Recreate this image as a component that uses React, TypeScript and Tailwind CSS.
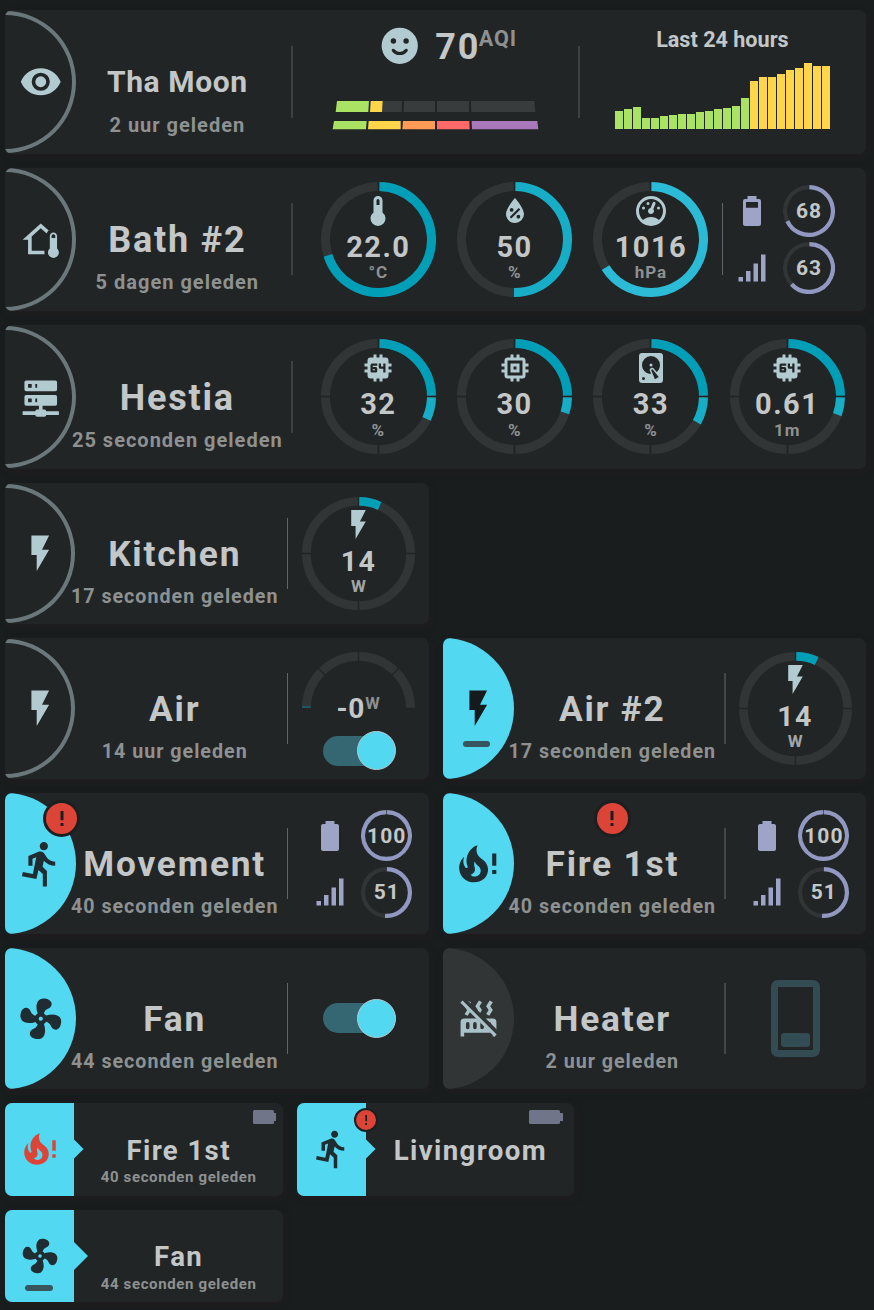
import type { ReactNode } from "react";
import clsx from "clsx";

const ICONS = {
  eye: "M12,9A3,3 0 0,0 9,12A3,3 0 0,0 12,15A3,3 0 0,0 15,12A3,3 0 0,0 12,9M12,17A5,5 0 0,1 7,12A5,5 0 0,1 12,7A5,5 0 0,1 17,12A5,5 0 0,1 12,17M12,4.5C7,4.5 2.73,7.61 1,12C2.73,16.39 7,19.5 12,19.5C17,19.5 21.27,16.39 23,12C21.27,7.61 17,4.5 12,4.5Z",
  homeThermometer:
    "M19 8C20.11 8 21 8.9 21 10V16.76C21.61 17.31 22 18.11 22 19C22 20.66 20.66 22 19 22C17.34 22 16 20.66 16 19C16 18.11 16.39 17.31 17 16.76V10C17 8.9 17.9 8 19 8M19 9C18.45 9 18 9.45 18 10V11H20V10C20 9.45 19.55 9 19 9M12 5.69L7 10.19V18H14.1L14 19L14.1 20H5V12H2L12 3L16.4 6.96C15.89 7.4 15.5 7.97 15.25 8.61L12 5.69Z",
  server:
    "M13,19H14A1,1 0 0,1 15,20H22V22H15A1,1 0 0,1 14,23H10A1,1 0 0,1 9,22H2V20H9A1,1 0 0,1 10,19H11V17H4A1,1 0 0,1 3,16V12A1,1 0 0,1 4,11H20A1,1 0 0,1 21,12V16A1,1 0 0,1 20,17H13V19M4,3H20A1,1 0 0,1 21,4V8A1,1 0 0,1 20,9H4A1,1 0 0,1 3,8V4A1,1 0 0,1 4,3M9,7H10V5H9V7M9,15H10V13H9V15M5,5V7H7V5H5M5,13V15H7V13H5Z",
  flash: "M7,2V13H10V22L17,10H13L17,2H7Z",
  run: "M13.5,5.5C14.59,5.5 15.5,4.58 15.5,3.5C15.5,2.38 14.59,1.5 13.5,1.5C12.39,1.5 11.5,2.38 11.5,3.5C11.5,4.58 12.39,5.5 13.5,5.5M9.89,19.38L10.89,15L13,17V23H15V15.5L12.89,13.5L13.5,10.5C14.79,12 16.79,13 19,13V11C17.09,11 15.5,10 14.69,8.58L13.69,7C13.29,6.38 12.69,6 12,6C11.69,6 11.5,6.08 11.19,6.08L6,8.28V13H8V9.58L9.79,8.88L8.19,17L3.29,16L2.89,18L9.89,19.38Z",
  fan: "M12,11A1,1 0 0,0 11,12A1,1 0 0,0 12,13A1,1 0 0,0 13,12A1,1 0 0,0 12,11M12.5,2C17,2 17.11,5.57 14.75,6.75C13.76,7.24 13.32,8.29 13.13,9.22C13.61,9.42 14.03,9.73 14.35,10.13C18.05,8.13 22.03,8.92 22.03,12.5C22.03,17 18.46,17.1 17.28,14.73C16.78,13.74 15.72,13.3 14.79,13.11C14.59,13.59 14.28,14 13.88,14.34C15.87,18.03 15.08,22 11.5,22C7,22 6.91,18.42 9.27,17.24C10.25,16.75 10.69,15.71 10.89,14.79C10.4,14.59 9.97,14.27 9.65,13.87C5.96,15.85 2,15.07 2,11.5C2,7 5.56,6.89 6.74,9.26C7.24,10.25 8.29,10.68 9.22,10.87C9.41,10.39 9.73,9.97 10.14,9.65C8.15,5.96 8.94,2 12.5,2Z",
  thermometer: "M15 13V5A3 3 0 0 0 9 5V13A5 5 0 1 0 15 13M12 4A1 1 0 0 1 13 5V8H11V5A1 1 0 0 1 12 4Z",
  waterPercent:
    "M12,3.25C12,3.25 6,10 6,14C6,17.32 8.69,20 12,20A6,6 0 0,0 18,14C18,10 12,3.25 12,3.25M14.47,9.97L15.53,11.03L9.53,17.03L8.47,15.97M9.75,10A1.25,1.25 0 0,1 11,11.25A1.25,1.25 0 0,1 9.75,12.5A1.25,1.25 0 0,1 8.5,11.25A1.25,1.25 0 0,1 9.75,10M14.25,14.5A1.25,1.25 0 0,1 15.5,15.75A1.25,1.25 0 0,1 14.25,17A1.25,1.25 0 0,1 13,15.75A1.25,1.25 0 0,1 14.25,14.5Z",
  gauge:
    "M12,2A10,10 0 0,0 2,12A10,10 0 0,0 12,22A10,10 0 0,0 22,12A10,10 0 0,0 12,2M12,4A8,8 0 0,1 20,12C20,14.4 19,16.5 17.3,18C15.9,16.7 14,16 12,16C10,16 8.2,16.7 6.7,18C5,16.5 4,14.4 4,12A8,8 0 0,1 12,4M14,5.89C13.62,5.9 13.26,6.15 13.1,6.54L11.81,9.77L11.71,10C11,10.13 10.41,10.6 10.14,11.26C9.73,12.29 10.23,13.45 11.26,13.86C12.29,14.27 13.45,13.77 13.86,12.74C14.12,12.08 14,11.32 13.57,10.76L13.67,10.5L14.96,7.29L14.97,7.26C15.17,6.75 14.92,6.17 14.41,5.96C14.28,5.91 14.15,5.89 14,5.89M10,6A1,1 0 0,0 9,7A1,1 0 0,0 10,8A1,1 0 0,0 11,7A1,1 0 0,0 10,6M7,9A1,1 0 0,0 6,10A1,1 0 0,0 7,11A1,1 0 0,0 8,10A1,1 0 0,0 7,9M17,9A1,1 0 0,0 16,10A1,1 0 0,0 17,11A1,1 0 0,0 18,10A1,1 0 0,0 17,9Z",
  cpu64: "M9,3V5H7A2,2 0 0,0 5,7V9H3V11H5V13H3V15H5V17A2,2 0 0,0 7,19H9V21H11V19H13V21H15V19H17A2,2 0 0,0 19,17V15H21V13H19V11H21V9H19V7A2,2 0 0,0 17,5H15V3H13V5H11V3M8,9H11.5V10.5H8.5V11.25H10.5A1,1 0 0,1 11.5,12.25V14A1,1 0 0,1 10.5,15H8A1,1 0 0,1 7,14V10A1,1 0 0,1 8,9M12.5,9H14V11H15.5V9H17V15H15.5V12.5H13.5A1,1 0 0,1 12.5,11.5M8.5,12.75V13.5H10V12.75",
  memory:
    "M17,17H7V7H17M21,11V9H19V7C19,5.89 18.1,5 17,5H15V3H13V5H11V3H9V5H7C5.89,5 5,5.89 5,7V9H3V11H5V13H3V15H5V17A2,2 0 0,0 7,19H9V21H11V19H13V21H15V19H17A2,2 0 0,0 19,17V15H21V13H19V11M13,13H11V11H13M15,9H9V15H15V9Z",
  harddisk:
    "M6,2H18A2,2 0 0,1 20,4V20A2,2 0 0,1 18,22H6A2,2 0 0,1 4,20V4A2,2 0 0,1 6,2M12,4A6,6 0 0,0 6,10C6,13.31 8.69,16 12.1,16L11.22,13.77C10.95,13.29 11.11,12.68 11.59,12.4L12.45,11.9C12.93,11.63 13.54,11.79 13.82,12.27L15.74,14.69C17.12,13.59 18,11.9 18,10A6,6 0 0,0 12,4M12,9A1,1 0 0,1 13,10A1,1 0 0,1 12,11A1,1 0 0,1 11,10A1,1 0 0,1 12,9M7,18A1,1 0 0,0 6,19A1,1 0 0,0 7,20A1,1 0 0,0 8,19A1,1 0 0,0 7,18M12.09,13.27L14.58,19.58L17.17,18.08L12.95,12.77L12.09,13.27Z",
  battery:
    "M16.67,4H15V2H9V4H7.33A1.33,1.33 0 0,0 6,5.33V20.67C6,21.4 6.6,22 7.33,22H16.67A1.33,1.33 0 0,0 18,20.67V5.33C18,4.6 17.4,4 16.67,4Z",
  batteryPartial:
    "M16,9.8H8V6H16M16.67,4H15V2H9V4H7.33A1.33,1.33 0 0,0 6,5.33V20.67C6,21.4 6.6,22 7.33,22H16.67A1.33,1.33 0 0,0 18,20.67V5.33C18,4.6 17.4,4 16.67,4Z",
  signal: "M3,21H6V18H3M8,21H11V14H8M13,21H16V9H13M18,21H21V3H18V21Z",
  fireAlert:
    "M15.66 11.2C15.43 10.9 15.15 10.64 14.89 10.38C14.22 9.78 13.46 9.35 12.82 8.72C11.33 7.26 11 4.85 11.95 3C11 3.23 10.17 3.75 9.46 4.32C6.87 6.4 5.85 10.07 7.07 13.22C7.11 13.32 7.15 13.42 7.15 13.55C7.15 13.77 7 13.97 6.8 14.05C6.57 14.15 6.33 14.09 6.14 13.93C6.08 13.88 6.04 13.83 6 13.76C4.87 12.33 4.69 10.28 5.45 8.64C3.78 10 2.87 12.3 3 14.47C3.06 14.97 3.12 15.47 3.29 15.97C3.43 16.57 3.7 17.17 4 17.7C5.08 19.43 6.95 20.67 8.96 20.92C11.1 21.19 13.39 20.8 15.03 19.32C16.86 17.66 17.5 15 16.56 12.72L16.43 12.46C16.22 12 15.66 11.2 15.66 11.2M12.5 17.5C12.22 17.74 11.76 18 11.4 18.1C10.28 18.5 9.16 17.94 8.5 17.28C9.69 17 10.4 16.12 10.61 15.23C10.78 14.43 10.46 13.77 10.33 13C10.21 12.26 10.23 11.63 10.5 10.94C10.69 11.32 10.89 11.7 11.13 12C11.9 13 13.11 13.44 13.37 14.8C13.41 14.94 13.43 15.08 13.43 15.23C13.46 16.05 13.1 16.95 12.5 17.5M19 7H21V13H19M19 15H21V17H19Z",
  radiator:
    "M7.95,3L6.53,5.19L7.95,7.4H7.94L5.95,10.5L4.22,9.6L5.64,7.39L4.22,5.19L6.22,2.09L7.95,3M13.95,2.89L12.53,5.1L13.95,7.3L13.94,7.31L11.95,10.4L10.22,9.5L11.64,7.3L10.22,5.1L12.22,2L13.95,2.89M20,2.89L18.56,5.1L20,7.3V7.31L18,10.4L16.25,9.5L17.67,7.3L16.25,5.1L18.25,2L20,2.89M2,22V14A2,2 0 0,1 4,12H20A2,2 0 0,1 22,14V22H20V20H4V22H2M6,14A1,1 0 0,0 5,15V17A1,1 0 0,0 6,18A1,1 0 0,0 7,17V15A1,1 0 0,0 6,14M10,14A1,1 0 0,0 9,15V17A1,1 0 0,0 10,18A1,1 0 0,0 11,17V15A1,1 0 0,0 10,14M14,14A1,1 0 0,0 13,15V17A1,1 0 0,0 14,18A1,1 0 0,0 15,17V15A1,1 0 0,0 14,14M18,14A1,1 0 0,0 17,15V17A1,1 0 0,0 18,18A1,1 0 0,0 19,17V15A1,1 0 0,0 18,14Z",
};

type IconName = keyof typeof ICONS;

function Icon({ name, className }: { name: IconName; className?: string }) {
  return (
    <svg viewBox="0 0 24 24" className={clsx("shrink-0 fill-current", className)}>
      <path d={ICONS[name]} fillRule={name === "batteryPartial" ? "evenodd" : "nonzero"} />
    </svg>
  );
}

function RadiatorOff({ className }: { className?: string }) {
  return (
    <svg viewBox="0 0 24 24" className={clsx("shrink-0 fill-current", className)}>
      <mask id="radiator-cut">
        <rect width="24" height="24" fill="white" />
        <path d="M0.5,1.5L3.2,-0.9L25.4,21.3L23,24Z" fill="black" />
      </mask>
      <path d={ICONS.radiator} mask="url(#radiator-cut)" />
      <path d="M3.1,1.9L1.9,3.17L20.9,22.2L22.11,20.96Z" />
    </svg>
  );
}

function arc(c: number, r: number, from: number, to: number) {
  const a = ((from - 90) * Math.PI) / 180;
  const b = ((to - 90) * Math.PI) / 180;
  const large = to - from > 180 ? 1 : 0;
  return `M${c + r * Math.cos(a)} ${c + r * Math.sin(a)}A${r} ${r} 0 ${large} 1 ${c + r * Math.cos(b)} ${c + r * Math.sin(b)}`;
}

type RingProps = {
  size: number;
  stroke: number;
  end: number;
  colors: string[];
  start?: number;
  sweep?: number;
  segments?: number;
  gap?: number;
};

function Ring({ size, stroke, end, colors, start = 0, sweep = 360, segments = 1, gap = 1 }: RingProps) {
  const c = size / 2;
  const r = c - stroke / 2;
  const step = sweep / segments;
  return (
    <svg viewBox={`0 0 ${size} ${size}`} className="absolute inset-0 size-full fill-none">
      {Array.from({ length: segments }, (_, i) => {
        const from = start + i * step + gap;
        const to = start + (i + 1) * step - gap;
        const stop = Math.min(to, end);
        return (
          <g key={i} strokeWidth={stroke}>
            <path d={arc(c, r, from, to)} stroke="#323536" />
            {stop > from && <path d={arc(c, r, from, stop)} stroke={colors[Math.min(i, colors.length - 1)]} />}
          </g>
        );
      })}
    </svg>
  );
}

const TEAL = ["#009fb7", "#17adc6", "#2bbbd6"];

type GaugeProps = { icon: IconName; value: string; unit: string; end: number; colors?: string[]; segments?: number };

function Gauge({ icon, value, unit, end, colors = TEAL, segments = 4 }: GaugeProps) {
  return (
    <div className="relative flex size-[115px] shrink-0 flex-col items-center pt-[11px]">
      <Ring size={115} stroke={9} end={end} colors={colors} segments={segments} />
      <Icon name={icon} className="size-9 text-[#b2cbd1]" />
      <div className="mt-[2px] text-[29px] leading-8 font-bold tracking-[0.05em] text-[#c4c7c7]">{value}</div>
      <div className="-mt-[0.6px] text-[17px] leading-5 font-bold tracking-[0.05em] text-[#8e9191]">{unit}</div>
    </div>
  );
}

function PowerGauge() {
  return (
    <div className="relative flex size-[113px] shrink-0 flex-col items-center pt-[10.5px]">
      <Ring size={113} stroke={8.8} end={24} colors={TEAL} segments={4} gap={0.8} />
      <Icon name="flash" className="size-[35px] text-[#b2cbd1]" />
      <div className="mt-[3.5px] text-[28.5px] leading-8 font-bold tracking-[0.05em] text-[#c4c7c7]">14</div>
      <div className="-mt-[2px] text-[17px] leading-5 font-bold text-[#a3a6a6]">W</div>
    </div>
  );
}

function SmallRing({ value, end, size }: { value: string; end: number; size: number }) {
  return (
    <div className="relative flex shrink-0 items-center justify-center" style={{ width: size, height: size }}>
      <Ring size={size} stroke={4.2} end={end} colors={["#9198c2"]} gap={0.8} />
      <span className="text-[21px] leading-6 font-bold tracking-[0.05em] text-[#c4c7c7]">{value}</span>
    </div>
  );
}

function DeviceStatus({
  battery,
  signal,
  partial,
  size,
  className,
}: {
  battery: [string, number];
  signal: [string, number];
  partial?: boolean;
  size: number;
  className?: string;
}) {
  return (
    <div className={clsx("flex flex-col gap-[5.4px] text-[#9ea4c6]", className)}>
      <div className="flex items-center gap-[13.5px]">
        <Icon name={partial ? "batteryPartial" : "battery"} className="size-9" />
        <SmallRing value={battery[0]} end={battery[1]} size={size} />
      </div>
      <div className="flex items-center gap-[13.5px]">
        <Icon name="signal" className="size-9" />
        <SmallRing value={signal[0]} end={signal[1]} size={size} />
      </div>
    </div>
  );
}

function Toggle() {
  return (
    <div className="relative flex h-10 w-[73px] items-center">
      <div className="h-[30px] w-[68px] rounded-full bg-[#346772]" />
      <div className="absolute right-0 size-[39px] rounded-full border border-[#b2cbd1] bg-[#52d8f1]" />
    </div>
  );
}

function AlertBadge({ small, className }: { small?: boolean; className: string }) {
  return (
    <div
      className={clsx(
        "absolute flex items-center justify-center rounded-full border-[#1b1f20] bg-[#dd4438]",
        small ? "size-6 border-2" : "size-[37px] border-[3.5px]",
        className,
      )}
    >
      <svg viewBox="0 0 4 15" className={clsx("fill-[#1b1f20]", small ? "h-[10px]" : "h-[15px]")}>
        <path d="M0.5 0H3.5V9.3H0.5ZM0.5 12H3.5V15H0.5Z" />
      </svg>
    </div>
  );
}

type Tone = "ring" | "active" | "muted";

function Shell({ className, children }: { className?: string; children: ReactNode }) {
  return (
    <div
      className={clsx(
        "relative flex rounded-[7px] bg-[#222526] shadow-[2px_3px_6px_rgba(35,29,31,0.8)]",
        className,
      )}
    >
      {children}
    </div>
  );
}

function HalfDisc({ tone, narrow, children }: { tone: Tone; narrow?: boolean; children: ReactNode }) {
  return (
    <div className="flex h-full w-[71px] shrink-0 items-center overflow-hidden rounded-l-[7px]">
      <div
        className={clsx(
          "relative flex items-center justify-center rounded-r-full",
          narrow ? "w-[70px]" : "w-full",
          tone === "ring" && "h-[calc(100%-1.6px)] text-[#b2cbd1]",
          tone === "active" && "h-full bg-[#52d8f1] text-[#1f2d32]",
          tone === "muted" && "h-full bg-[#323536] text-[#a9c1c7]",
        )}
      >
        {tone === "ring" && (
          <div className="absolute inset-0 rounded-r-full border-4 border-l-0 border-[#6a777b]" />
        )}
        {children}
      </div>
    </div>
  );
}

function WideCard({ icon, name, small, ago, children }: { icon: IconName; name: string; small?: boolean; ago: string; children: ReactNode }) {
  return (
    <Shell className="h-[143.67px]">
      <HalfDisc tone="ring">
        <Icon name={icon} className="size-[43.5px]" />
      </HalfDisc>
      <div className="-ml-[5.7px] flex w-[214px] shrink-0 flex-col items-center pt-[51.3px] whitespace-nowrap">
        <div
          className={clsx(
            "leading-[42px] font-bold text-[#c4c7c7]",
            small ? "text-[30px] tracking-[0.02em]" : "text-[36px] tracking-[0.05em]",
          )}
        >
          {name}
        </div>
        <div className="mt-[9.3px] text-[20px] leading-6 font-bold tracking-[0.05em] text-[#8e9191]">{ago}</div>
      </div>
      <div className="ml-[6.7px] h-[72px] w-[2px] shrink-0 self-center bg-[#3e4142]" />
      {children}
    </Shell>
  );
}

function HalfCard({
  tone,
  icon,
  name,
  ago,
  right,
  badge,
  children,
}: {
  tone: Tone;
  icon: ReactNode;
  name: string;
  ago: string;
  right?: boolean;
  badge?: ReactNode;
  children: ReactNode;
}) {
  return (
    <Shell className="h-[141px]">
      <HalfDisc tone={tone} narrow={tone === "ring"}>{icon}</HalfDisc>
      <div className="-ml-[6.3px] flex w-[209px] shrink-0 flex-col items-center pt-[50px] whitespace-nowrap">
        <div className="pl-px text-[35.3px] leading-[42px] font-bold tracking-[0.05em] text-[#c4c7c7]">{name}</div>
        <div className="mt-[10px] pl-px text-[19.7px] leading-6 font-bold tracking-[0.05em] text-[#8e9191]">{ago}</div>
      </div>
      <div
        className={clsx(
          "h-[71px] shrink-0 self-center",
          right ? "mr-[13px] ml-[7.3px] w-[2px] bg-[#45484a]" : "mr-[14px] ml-[8.3px] w-px bg-[#626567]",
        )}
      />
      <div className="flex w-[113px] shrink-0 items-center justify-center">{children}</div>
      {badge}
    </Shell>
  );
}

function MiniCard({
  icon,
  name,
  ago,
  bigArrow,
  children,
}: {
  icon: ReactNode;
  name: string;
  ago?: string;
  bigArrow?: boolean;
  children?: ReactNode;
}) {
  return (
    <Shell className="h-full">
      <div className="relative flex w-[69.3px] shrink-0 items-center justify-center rounded-l-[7px] bg-[#52d8f1] text-[#1f2d32]">
        {icon}
        <svg
          viewBox="0 0 10 20"
          className={clsx(
            "absolute top-1/2 right-[0.3px] translate-x-full -translate-y-1/2 overflow-visible fill-[#52d8f1]",
            bigArrow ? "h-7 w-[14px]" : "h-[18.6px] w-[9.3px]",
          )}
        >
          <path d="M-2 0H0L10 10L0 20H-2Z" />
        </svg>
      </div>
      <div className="flex flex-1 flex-col items-center pt-8 whitespace-nowrap">
        <div className={clsx("text-[27.6px] leading-8 font-bold tracking-[0.05em] text-[#c4c7c7]", bigArrow && "-mt-px mb-px")}>{name}</div>
        {ago && <div className="mt-px text-[15px] leading-[18px] font-bold tracking-[0.042em] text-[#8e9191]">{ago}</div>}
      </div>
      {children}
    </Shell>
  );
}

function MiniBattery({ wide, className }: { wide?: boolean; className: string }) {
  return (
    <div className={clsx("absolute flex h-[14px] items-center", className)}>
      <div className={clsx("h-full rounded-[1.5px] bg-[#70758a]", wide ? "w-[31px]" : "w-[21px]")} />
      <div className={clsx("h-2 bg-[#70758a]", wide ? "w-[3.7px]" : "w-[2.2px]")} />
    </div>
  );
}

function AqiBars() {
  return (
    <svg viewBox="0 0 620 90" className="ml-[39px] h-[30px] w-[206.67px]">
      <g fill="#393c3d">
        <path d="M151 3H210L209 36H150Z" />
        <path d="M216 3H309V36H215Z" />
        <path d="M315 3H411V36H315Z" />
        <path d="M417 3H607L610 36H418Z" />
      </g>
      <path fill="#aae363" d="M15 3H111L109 36H11ZM6 63H104L102 88H2Z" />
      <path fill="#ffd64a" d="M116 3H152L150 36H114ZM110 63H206V88H108Z" />
      <path fill="#ff9a57" d="M213 63H309V88H211Z" />
      <path fill="#ff6968" d="M315 63H412L413 88H315Z" />
      <path fill="#a978ba" d="M419 63H616L619 88H420Z" />
    </svg>
  );
}

const HISTORY = [17.7, 19.7, 21.7, 10.7, 10.7, 12.7, 13.7, 14.7, 14.7, 16.7, 17.7, 19.7, 20.7, 22.7, 31, 48, 51.7, 51.7, 54.7, 58.7, 60.7, 65.7, 62.7, 62.7];

export default function App() {
  return (
    <div className="h-[1310px] w-[874px] overflow-hidden bg-[#191d1e] pt-[10px] pl-[5px] font-[Roboto,sans-serif]">
      <div className="flex w-[861.2px] flex-col gap-[14px]">
        <WideCard icon="eye" name="Tha Moon" small ago="2 uur geleden">
          <div className="flex w-[285px] shrink-0 flex-col pt-[14px]">
            <div className="flex h-11 pl-[85px]">
              <svg viewBox="0 0 24 24" className="size-[43.5px]">
                <circle cx="12" cy="12" r="10" fill="#b2cbd1" />
                <g fill="#222526">
                  <circle cx="8.5" cy="9.4" r="1.5" />
                  <circle cx="15.5" cy="9.4" r="1.5" />
                </g>
                <path d="M8.4 14.5C10.2 16.9 13.8 16.9 15.6 14.5" fill="none" stroke="#222526" strokeWidth="1.7" strokeLinecap="round" />
              </svg>
              <div className="mt-px ml-[13.7px] text-[36px] leading-[44px] font-bold tracking-[0.05em] text-[#c4c7c7]">70</div>
              <div className="mt-[3px] -ml-[1.4px] text-[21.6px] leading-6 font-bold tracking-[0.04em] text-[#8e9191]">AQI</div>
            </div>
            <div className="mt-8">
              <AqiBars />
            </div>
          </div>
          <div className="h-[72px] w-[2px] shrink-0 self-center bg-[#3e4142]" />
          <div className="flex flex-1 flex-col items-center pt-[18px] pr-[1.4px]">
            <div className="text-[21.6px] leading-6 font-bold text-[#c4c7c7]">Last 24 hours</div>
            <div className="flex h-[77px] items-end gap-px">
              {HISTORY.map((h, i) => (
                <div key={i} className={clsx("w-2", i < 15 ? "bg-[#aae363]" : "bg-[#ffd64a]")} style={{ height: h }} />
              ))}
            </div>
          </div>
        </WideCard>

        <WideCard icon="homeThermometer" name="Bath #2" ago="5 dagen geleden">
          <div className="ml-[27.8px] flex items-center gap-[21.3px]">
            <Gauge icon="thermometer" value="22.0" unit="°C" end={252.5} colors={["#009fb7"]} segments={1} />
            <Gauge icon="waterPercent" value="50" unit="%" end={180.5} colors={["#17adc6"]} segments={1} />
            <Gauge icon="gauge" value="1016" unit="hPa" end={238} colors={["#2bbbd6"]} segments={1} />
          </div>
          <div className="ml-[13.6px] h-[72px] w-px shrink-0 self-center bg-[#636668]" />
          <DeviceStatus battery={["68", 245]} signal={["63", 227]} partial size={52} className="ml-[10.6px] self-center" />
        </WideCard>

        <WideCard icon="server" name="Hestia" ago="25 seconden geleden">
          <div className="ml-[27.8px] flex items-center gap-[21.3px] pb-px">
            <Gauge icon="cpu64" value="32" unit="%" end={115} />
            <Gauge icon="memory" value="30" unit="%" end={108} />
            <Gauge icon="harddisk" value="33" unit="%" end={119} />
            <Gauge icon="cpu64" value="0.61" unit="1m" end={110} />
          </div>
        </WideCard>

        <div className="grid grid-cols-2 gap-[14px]">
          <HalfCard tone="ring" icon={<Icon name="flash" className="size-[42.5px]" />} name="Kitchen" ago="17 seconden geleden">
            <PowerGauge />
          </HalfCard>
          <div />

          <HalfCard tone="ring" icon={<Icon name="flash" className="size-[42.5px]" />} name="Air" ago="14 uur geleden">
            <div className="relative flex size-[113px] flex-col items-center pt-[41px]">
              <Ring size={113} stroke={8.8} start={-90} sweep={180} end={-87.6} colors={["#1a6573"]} segments={4} gap={0.8} />
              <div className="mr-px flex text-[#c4c7c7]">
                <span className="text-[28px] leading-8 font-bold tracking-[0.03em]">-0</span>
                <span className="mt-px text-[16.5px] leading-5 font-bold text-[#8e9191]">W</span>
              </div>
              <div className="mt-[6px] ml-px">
                <Toggle />
              </div>
            </div>
          </HalfCard>
          <HalfCard
            tone="active"
            right
            icon={
              <>
                <Icon name="flash" className="size-[42.5px] text-[#151b1d]" />
                <div className="absolute bottom-[32px] left-[20px] h-[6px] w-[27px] rounded-full bg-[#36555d]" />
              </>
            }
            name="Air #2"
            ago="17 seconden geleden"
          >
            <PowerGauge />
          </HalfCard>

          <HalfCard
            tone="active"
            icon={<Icon name="run" className="size-[49.5px]" />}
            name="Movement"
            ago="40 seconden geleden"
            badge={<AlertBadge className="top-[7px] left-[38px]" />}
          >
            <DeviceStatus battery={["100", 360]} signal={["51", 183.6]} size={51} className="mt-px ml-[7px]" />
          </HalfCard>
          <HalfCard
            tone="active"
            right
            icon={<Icon name="fireAlert" className="size-[49.5px]" />}
            name="Fire 1st"
            ago="40 seconden geleden"
            badge={<AlertBadge className="top-[7px] left-[151px]" />}
          >
            <DeviceStatus battery={["100", 360]} signal={["51", 183.6]} size={51} className="mt-px ml-[8px]" />
          </HalfCard>

          <HalfCard tone="active" icon={<Icon name="fan" className="size-[49.5px] rotate-[8deg]" />} name="Fan" ago="44 seconden geleden">
            <div className="ml-px">
              <Toggle />
            </div>
          </HalfCard>
          <HalfCard tone="muted" right icon={<RadiatorOff className="size-[43px]" />} name="Heater" ago="2 uur geleden">
            <div className="flex h-[77px] w-[49px] items-end rounded-[7px] border-[7px] border-[#334c53] p-[3px]">
              <div className="h-[14px] w-full rounded-[3px] bg-[#334c53]" />
            </div>
          </HalfCard>
        </div>

        <div className="grid grid-cols-[278px_277.3px] grid-rows-[93px_92px] gap-[14px]">
          <MiniCard icon={<Icon name="fireAlert" className="size-[42px] text-[#dd4438]" />} name="Fire 1st" ago="40 seconden geleden">
            <MiniBattery className="top-[7px] right-[7px]" />
          </MiniCard>
          <MiniCard icon={<Icon name="run" className="size-[42px]" />} name="Livingroom">
            <MiniBattery wide className="top-[7px] right-[11px]" />
            <AlertBadge small className="top-[5px] left-[57px]" />
          </MiniCard>
          <MiniCard
            bigArrow
            icon={
              <>
                <Icon name="fan" className="size-[42px] rotate-[8deg]" />
                <div className="absolute bottom-[11px] left-[20px] h-[6px] w-[28px] rounded-full bg-[#36555d]" />
              </>
            }
            name="Fan"
            ago="44 seconden geleden"
          />
        </div>
      </div>
    </div>
  );
}
